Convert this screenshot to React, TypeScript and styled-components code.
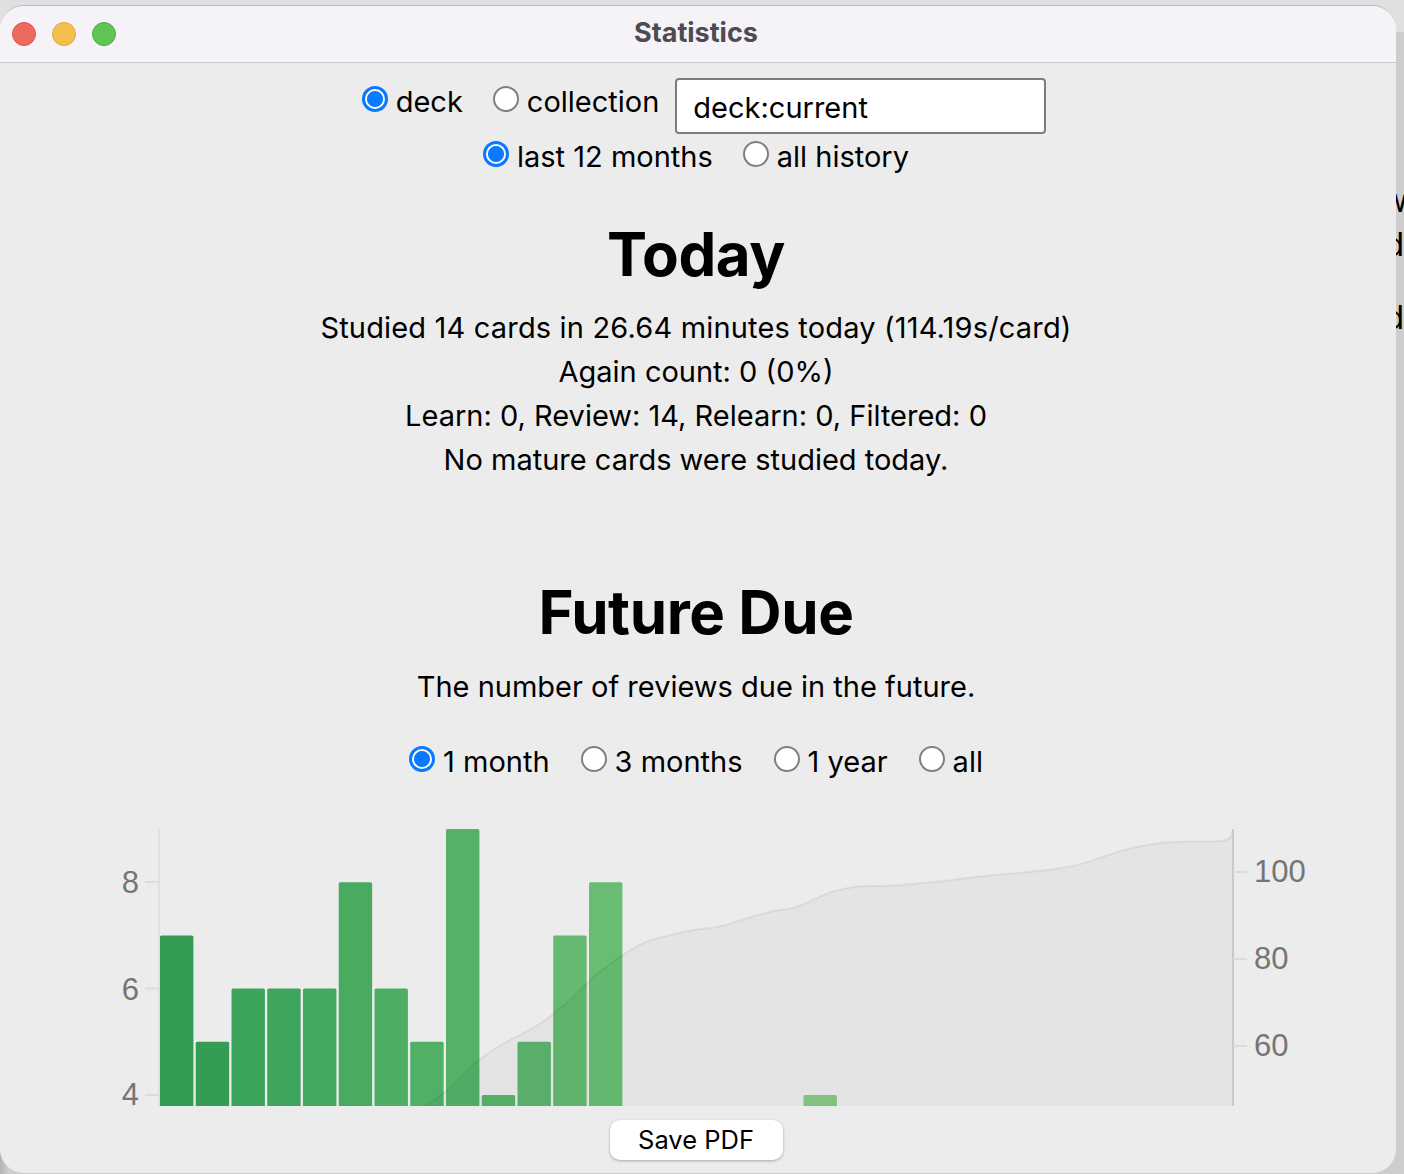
import React from 'react';
import styled, { createGlobalStyle } from 'styled-components';

const GlobalStyle = createGlobalStyle`
  html, body {
    margin: 0;
    padding: 0;
    background: #c9c9c9;
  }
  body {
    font-family: Inter, "Liberation Sans", sans-serif;
    color: #000;
  }
`;

const Desktop = styled.div`
  width: 1404px;
  height: 1174px;
  display: flex;
  overflow: hidden;
  background: linear-gradient(to right, #b4b4b4, #cdcdcd 8px);
`;

const Window = styled.div`
  width: 1396px;
  height: 1168px;
  box-sizing: border-box;
  margin-top: 5px;
  flex: none;
  display: flex;
  flex-direction: column;
  position: relative;
  z-index: 1;
  border-radius: 24px;
  border-top: 1px solid #b9b9b9;
  background: #ececec;
  overflow: hidden;
`;

const TopEdge = styled.div`
  position: absolute;
  top: 0;
  left: 0;
  width: 1404px;
  height: 32px;
  background: #e0e0e0;
`;

const SideStrip = styled.div`
  width: 8px;
  flex: none;
  display: flex;
  flex-direction: column;
  align-items: flex-end;
  padding-top: 179px;
  font-size: 32px;
  line-height: 44px;
`;

const SideLine = styled.div<{ $gap?: number; $inset?: number }>`
  white-space: nowrap;
  margin-right: ${(p) => p.$inset ?? 0}px;
  margin-bottom: ${(p) => p.$gap ?? 0}px;
`;

const TitleBar = styled.div`
  height: 56px;
  flex: none;
  display: flex;
  align-items: center;
  background: #f5f2f8;
  border-bottom: 1px solid #c6c6c6;
  position: relative;
  padding-left: 12px;
  gap: 16px;
`;

const Light = styled.span<{ $bg: string; $edge: string }>`
  width: 24px;
  height: 24px;
  box-sizing: border-box;
  border-radius: 50%;
  background: ${(p) => p.$bg};
  border: 1px solid ${(p) => p.$edge};
`;

const Title = styled.div`
  position: absolute;
  left: 0;
  right: 4px;
  top: 11px;
  text-align: center;
  font-size: 27px;
  line-height: 32px;
  font-weight: 700;
  color: #4d4b50;
`;

const Content = styled.div`
  flex: 1;
  min-height: 0;
  overflow: hidden;
  padding: 15px 4px 0 0;
  display: flex;
  flex-direction: column;
  align-items: center;
`;

const Row = styled.div<{ $mt?: number; $ml?: number; $gap?: number }>`
  display: flex;
  justify-content: center;
  align-items: flex-start;
  gap: ${(p) => p.$gap ?? 30}px;
  height: 44px;
  margin-top: ${(p) => p.$mt ?? 0}px;
  margin-left: ${(p) => p.$ml ?? 0}px;
`;

const RadioLabel = styled.label`
  display: flex;
  align-items: flex-start;
  gap: 8px;
  font-size: 29px;
  line-height: 48px;
  white-space: nowrap;
`;

const Radio = styled.input.attrs({ type: 'radio', readOnly: true })`
  appearance: none;
  -webkit-appearance: none;
  width: 26px;
  height: 26px;
  margin: 8px 0 0;
  box-sizing: border-box;
  border-radius: 50%;
  background: #fff;
  border: 2px solid #7f7f7f;

  &:checked {
    border: 3px solid #0a78ff;
    background: radial-gradient(circle, #0a78ff 0 7.5px, #fff 8.5px);
  }
`;

const SearchInput = styled.input.attrs({ type: 'text', readOnly: true })`
  width: 371px;
  height: 56px;
  box-sizing: border-box;
  margin-left: -14px;
  padding: 2px 16px 0;
  font: inherit;
  font-size: 29px;
  color: #000;
  background: #fff;
  border: 2px solid #7d7d7d;
  border-radius: 4px;
  outline: none;
`;

const Heading = styled.h1<{ $mt: number }>`
  margin: ${(p) => p.$mt}px 0 0;
  font-size: 60px;
  line-height: 72px;
  font-weight: 700;
  letter-spacing: -0.4px;
  white-space: nowrap;
`;

const StatLines = styled.div`
  margin-top: 16px;
  font-size: 29px;
  line-height: 44px;
  text-align: center;
  white-space: nowrap;
`;

const WideStatLine = styled.div`
  letter-spacing: 0.17px;
`;

const Description = styled.p`
  margin: 17px 0 0;
  font-size: 29px;
  line-height: 44px;
  white-space: nowrap;
`;

const ChartBox = styled.div`
  width: 1392px;
  height: 284px;
  margin-top: 40px;
  flex: none;
  overflow: hidden;
`;

const Chart = styled.svg`
  display: block;
  font-family: "Liberation Sans", Arial, sans-serif;
  font-size: 31px;
`;

const Footer = styled.div`
  height: 65px;
  flex: none;
  display: flex;
  justify-content: center;
  align-items: flex-start;
  padding: 12px 4px 0 0;
  box-sizing: border-box;
`;

const SaveButton = styled.button`
  width: 173px;
  height: 40px;
  padding: 0 0 2px;
  font-family: inherit;
  font-size: 25.5px;
  color: #000;
  background: #fff;
  border: none;
  border-radius: 10px;
  box-shadow: 0 1px 3px rgba(0, 0, 0, 0.3);
`;

const barTop = (v: number) => 1095 - (v - 4) * 53.2;

const bars: [number, number, string][] = [
  [0, 7, '#339b52'],
  [1, 5, '#359c53'],
  [2, 6, '#3ca35a'],
  [3, 6, '#40a55c'],
  [4, 6, '#43a75e'],
  [5, 8, '#48ab60'],
  [6, 6, '#4dae63'],
  [7, 5, '#50b066'],
  [8, 9, '#53b268'],
  [9, 4, '#58b46a'],
  [10, 5, '#5cb56d'],
  [11, 7, '#63ba70'],
  [12, 8, '#68bd72'],
  [18, 4, '#86c983'],
];

const linePath =
  'M425 1106 C433 1101 438 1098 444 1093 C458 1081 468 1068 479 1060 C486 1055 490 1052 496 1048 ' +
  'C512 1038 526 1033 541 1023 C556 1013 570 1000 582 988 C597 973 608 965 620 957 ' +
  'C630 950 636 946 646 942 C660 937 670 935 683 932 C700 928 714 929 729 924 ' +
  'C742 920 752 916 765 913 C780 909 790 910 802 905 C816 899 824 893 839 890 ' +
  'C850 887 858 886 871 886 C886 886 898 886 912 884 C932 882 948 881 967 878 ' +
  'C1005 873 1050 872 1077 865 C1100 859 1118 850 1142 846 C1153 844 1162 842 1174 842 ' +
  'C1190 841 1205 842 1220 841 C1228 841 1232 838 1233 831';

export default function App() {
  return (
    <>
      <GlobalStyle />
      <Desktop>
        <TopEdge />
        <Window>
          <TitleBar>
            <Light $bg="#ed6a5e" $edge="#d4574c" />
            <Light $bg="#f5bf4f" $edge="#d9a540" />
            <Light $bg="#61c554" $edge="#50a945" />
            <Title>Statistics</Title>
          </TitleBar>
          <Content>
            <Row $ml={16}>
              <RadioLabel>
                <Radio name="scope" defaultChecked />
                deck
              </RadioLabel>
              <RadioLabel>
                <Radio name="scope" />
                collection
              </RadioLabel>
              <SearchInput defaultValue="deck:current" />
            </Row>
            <Row $mt={11}>
              <RadioLabel>
                <Radio name="range" defaultChecked />
                last 12 months
              </RadioLabel>
              <RadioLabel>
                <Radio name="range" />
                all history
              </RadioLabel>
            </Row>
            <Heading $mt={41}>Today</Heading>
            <StatLines>
              <WideStatLine>Studied 14 cards in 26.64 minutes today (114.19s/card)</WideStatLine>
              <div>Again count: 0 (0%)</div>
              <div>Learn: 0, Review: 14, Relearn: 0, Filtered: 0</div>
              <div>No mature cards were studied today.</div>
            </StatLines>
            <Heading $mt={94}>Future Due</Heading>
            <Description>The number of reviews due in the future.</Description>
            <Row $mt={29} $gap={31}>
              <RadioLabel>
                <Radio name="future" defaultChecked />
                1 month
              </RadioLabel>
              <RadioLabel>
                <Radio name="future" />
                3 months
              </RadioLabel>
              <RadioLabel>
                <Radio name="future" />
                1 year
              </RadioLabel>
              <RadioLabel>
                <Radio name="future" />
                all
              </RadioLabel>
            </Row>
            <ChartBox>
              <Chart width={1392} height={284} viewBox="0 822 1392 284">
                <line x1={159} y1={828} x2={159} y2={1106} stroke="#e0e0e0" strokeWidth={2} />
                <line x1={145} y1={882} x2={159} y2={882} stroke="#dcdcdc" strokeWidth={2} />
                <line x1={145} y1={988.5} x2={159} y2={988.5} stroke="#dcdcdc" strokeWidth={2} />
                <line x1={145} y1={1095} x2={159} y2={1095} stroke="#dcdcdc" strokeWidth={2} />
                <text x={139} y={893} fill="#757575" textAnchor="end">8</text>
                <text x={139} y={1000} fill="#757575" textAnchor="end">6</text>
                <text x={139} y={1105} fill="#757575" textAnchor="end">4</text>
                {bars.map(([i, v, color]) => (
                  <rect
                    key={i}
                    x={160 + i * 35.75}
                    y={barTop(v)}
                    width={33.4}
                    height={1106 - barTop(v) + 2}
                    rx={1.5}
                    fill={color}
                  />
                ))}
                <path d={`${linePath} L1233 1106 Z`} fill="rgba(0,0,0,0.03)" />
                <path d={linePath} fill="none" stroke="rgba(0,0,0,0.06)" strokeWidth={2} />
                <line x1={1233} y1={829} x2={1233} y2={1106} stroke="#c9c9c9" strokeWidth={2} />
                <line x1={1233} y1={872} x2={1247} y2={872} stroke="#dcdcdc" strokeWidth={2} />
                <line x1={1233} y1={959} x2={1247} y2={959} stroke="#dcdcdc" strokeWidth={2} />
                <line x1={1233} y1={1046} x2={1247} y2={1046} stroke="#dcdcdc" strokeWidth={2} />
                <text x={1254} y={882} fill="#757575">100</text>
                <text x={1254} y={969} fill="#757575">80</text>
                <text x={1254} y={1056} fill="#757575">60</text>
              </Chart>
            </ChartBox>
          </Content>
          <Footer>
            <SaveButton>Save PDF</SaveButton>
          </Footer>
        </Window>
        <SideStrip>
          <SideLine $inset={-4}>w</SideLine>
          <SideLine $gap={29}>d</SideLine>
          <SideLine>d</SideLine>
        </SideStrip>
      </Desktop>
    </>
  );
}
